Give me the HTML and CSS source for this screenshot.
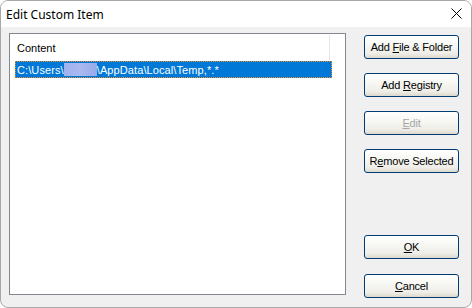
FILE: index.html
```html
<!DOCTYPE html>
<html>
<head>
<meta charset="utf-8">
<link rel="stylesheet" href="styles.css">
</head>
<body>
<div class="window">
  <div class="titlebar">
    <span class="title">Edit Custom Item</span>
    <span class="close">
      <svg width="11" height="11" viewBox="0 0 11 11"><path d="M0.5 0.5L10.5 10.5M10.5 0.5L0.5 10.5" stroke="#000" stroke-width="1" fill="none"/></svg>
    </span>
  </div>
  <div class="body">
    <div class="listbox">
      <div class="header">
        <div class="col">Content</div>
      </div>
      <div class="row selected">
        <span>C:\Users\</span><span class="blur"></span><span>\AppData\Local\Temp,*.*</span>
      </div>
    </div>
    <div class="buttons">
      <div class="group">
        <button class="btn">Add <u>F</u>ile &amp; Folder</button>
        <button class="btn">Add <u>R</u>egistry</button>
        <button class="btn disabled"><u>E</u>dit</button>
        <button class="btn">R<u>e</u>move Selected</button>
      </div>
      <div class="group bottom">
        <button class="btn"><u>O</u>K</button>
        <button class="btn"><u>C</u>ancel</button>
      </div>
    </div>
  </div>
</div>
</body>
</html>
```
FILE: styles.css
```css
html, body {
  margin: 0;
  padding: 0;
  background: #ffffff;
}
.window {
  width: 472px;
  height: 308px;
  box-sizing: border-box;
  border: 1px solid #a8a8a8;
  border-radius: 8px;
  overflow: hidden;
  display: flex;
  flex-direction: column;
  background: #f0f0f0;
}
.titlebar {
  height: 26px;
  background: #ffffff;
  display: flex;
  align-items: center;
  justify-content: space-between;
  flex: none;
}
.title {
  font-family: "Noto Sans", "Open Sans", sans-serif;
  font-size: 12px;
  color: #000;
  padding-left: 5px;
  padding-top: 1px;
}
.close {
  width: 46px;
  height: 26px;
  display: flex;
  align-items: center;
  justify-content: center;
  margin-right: -8px;
  padding-bottom: 1px;
}
.close svg { display: block; }
.body {
  flex: 1;
  display: flex;
  padding: 6px 12px 12px 8px;
  gap: 18px;
}
.listbox {
  width: 337px;
  box-sizing: border-box;
  border: 1px solid #828790;
  background: #ffffff;
  font-family: "Liberation Sans", Arial, sans-serif;
  font-size: 11px;
  color: #000;
}
.header {
  height: 26px;
  display: flex;
}
.col {
  width: 320px;
  box-sizing: border-box;
  border-right: 1px solid #e5e5e5;
  padding-left: 7px;
  padding-top: 7px;
  margin-top: 1px;
}
.row {
  margin-left: 5px;
  width: 317px;
  height: 17px;
  box-sizing: border-box;
  display: flex;
  align-items: center;
  padding-left: 1px;
  margin-top: 1px;
  letter-spacing: 0.1px;
}
.row.selected {
  background: #0078d7;
  color: #ffffff;
  border: 1px dotted #f08a24;
}
.blur {
  display: inline-block;
  width: 33px;
  height: 13px;
  background: linear-gradient(90deg, #9fb2ee, #aab8ef 50%, #98aaea);
}
.buttons {
  width: 95px;
  display: flex;
  flex-direction: column;
  justify-content: space-between;
  padding-top: 2px;
  margin-bottom: -3px;
}
.group {
  display: flex;
  flex-direction: column;
  gap: 14px;
}
.group.bottom {
  gap: 15px;
}
.btn {
  width: 95px;
  height: 24px;
  box-sizing: border-box;
  border: 1px solid #003c74;
  border-radius: 3px;
  background: linear-gradient(180deg, #ffffff 0%, #f6f6f2 45%, #eeede7 80%, #dcd8cc 100%);
  font-family: "Liberation Sans", Arial, sans-serif;
  font-size: 11px;
  letter-spacing: -0.2px;
  color: #000;
  padding: 0;
  margin: 0;
}
.btn u {
  text-underline-offset: 1px;
}
.btn.disabled {
  color: #a7a6aa;
}
```
